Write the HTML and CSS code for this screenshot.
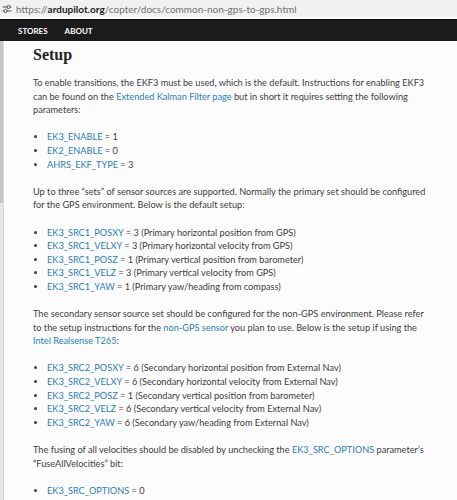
FILE: index.html
```html
<html>
<head>
<link rel="stylesheet" href="styles.css">
<meta charset="UTF-8">
<title>Non-GPS to GPS Transitions</title>
</head>
<body>
  <div class="urlbar">
    <svg class="tune" width="10" height="10" viewBox="0 0 10 10">
      <line x1="0.5" y1="3" x2="9.5" y2="3" stroke="#555" stroke-width="1"/>
      <line x1="0.5" y1="7" x2="9.5" y2="7" stroke="#555" stroke-width="1"/>
      <circle cx="6.5" cy="3" r="1.6" fill="#f1f1f1" stroke="#555" stroke-width="1"/>
      <circle cx="3.5" cy="7" r="1.6" fill="#f1f1f1" stroke="#555" stroke-width="1"/>
    </svg>
    <span class="url">https://<b>ardupilot.org</b>/copter/docs/common-non-gps-to-gps.html</span>
  </div>

  <nav class="topnav">
    <a href="#">STORES</a>
    <a href="#">ABOUT</a>
  </nav>

  <div class="page">
    <div class="rail">
      <div class="rail-thumb"></div>
    </div>
    <div class="doc">
      <h2>Setup</h2>

      <p>To enable transitions, the EKF3 must be used, which is the default. Instructions for enabling EKF3 can be found on the <a href="#">Extended Kalman Filter page</a> but in short it requires setting the following parameters:</p>
      <ul>
        <li><a href="#">EK3_ENABLE</a> = 1</li>
        <li><a href="#">EK2_ENABLE</a> = 0</li>
        <li><a href="#">AHRS_EKF_TYPE</a> = 3</li>
      </ul>

      <p>Up to three “sets” of sensor sources are supported. Normally the primary set should be configured for the GPS environment. Below is the default setup:</p>
      <ul>
        <li><a href="#">EK3_SRC1_POSXY</a> = 3 (Primary horizontal position from GPS)</li>
        <li><a href="#">EK3_SRC1_VELXY</a> = 3 (Primary horizontal velocity from GPS)</li>
        <li><a href="#">EK3_SRC1_POSZ</a> = 1 (Primary vertical position from barometer)</li>
        <li><a href="#">EK3_SRC1_VELZ</a> = 3 (Primary vertical velocity from GPS)</li>
        <li><a href="#">EK3_SRC1_YAW</a> = 1 (Primary yaw/heading from compass)</li>
      </ul>

      <p>The secondary sensor source set should be configured for the non-GPS environment. Please refer to the setup instructions for the <a href="#">non-GPS sensor</a> you plan to use. Below is the setup if using the <a href="#">Intel Realsense T265</a>:</p>
      <ul>
        <li><a href="#">EK3_SRC2_POSXY</a> = 6 (Secondary horizontal position from External Nav)</li>
        <li><a href="#">EK3_SRC2_VELXY</a> = 6 (Secondary horizontal velocity from External Nav)</li>
        <li><a href="#">EK3_SRC2_POSZ</a> = 1 (Secondary vertical position from barometer)</li>
        <li><a href="#">EK3_SRC2_VELZ</a> = 6 (Secondary vertical velocity from External Nav)</li>
        <li><a href="#">EK3_SRC2_YAW</a> = 6 (Secondary yaw/heading from External Nav)</li>
      </ul>

      <p>The fusing of all velocities should be disabled by unchecking the <a href="#">EK3_SRC_OPTIONS</a> parameter’s “FuseAllVelocities” bit:</p>
      <ul>
        <li><a href="#">EK3_SRC_OPTIONS</a> = 0</li>
      </ul>
    </div>
  </div>
</body>
</html>
```

FILE: styles.css
```css
* {
  box-sizing: border-box;
}

body {
  margin: 0;
  background-color: #fcfcfc;
  overflow: hidden;
}

/* address bar strip */
.urlbar {
  height: 17px;
  background-color: #f1f1f1;
  display: flex;
  align-items: center;
  padding-left: 2px;
  gap: 4px;
  border-bottom: 2px solid #fdfdfd;
  box-sizing: content-box;
}
.url {
  font-family: Lato, "DejaVu Sans", sans-serif;
  font-size: 10px;
  color: #707070;
  white-space: nowrap;
}
.url b {
  color: #222222;
}

/* black top menu */
.topnav {
  height: 22px;
  background-color: #1b1b1b;
  border-top: 1px solid #0c0c0c;
  display: flex;
  align-items: center;
  padding-left: 18px;
  gap: 17px;
}
.topnav a {
  font-family: Lato, sans-serif;
  font-weight: bold;
  font-size: 8px;
  color: #ffffff;
  text-decoration: none;
}

.page {
  display: flex;
}
.rail {
  width: 4px;
  flex: none;
  background-color: #e6e6e6;
  border-right: 1px solid #d6d6d6;
}
.rail-thumb {
  height: 162px;
  background-color: #c6c6c6;
}

.doc {
  padding-left: 29px;
  width: 424px;
  font-family: Lato, "Open Sans", sans-serif;
  font-size: 9.2px;
  line-height: 13.6px;
  color: #404040;
}
.doc h2 {
  font-family: "Liberation Serif", serif;
  font-weight: bold;
  font-size: 16px;
  color: #222222;
  margin: 4px 0 11px 0;
  line-height: 20px;
}
.doc p {
  margin: 0 0 13.6px 0;
}
.doc ul {
  margin: 0 0 13.6px 0;
  padding-left: 14px;
  list-style: disc;
}
.doc a {
  color: #2980b9;
  text-decoration: none;
}
```
